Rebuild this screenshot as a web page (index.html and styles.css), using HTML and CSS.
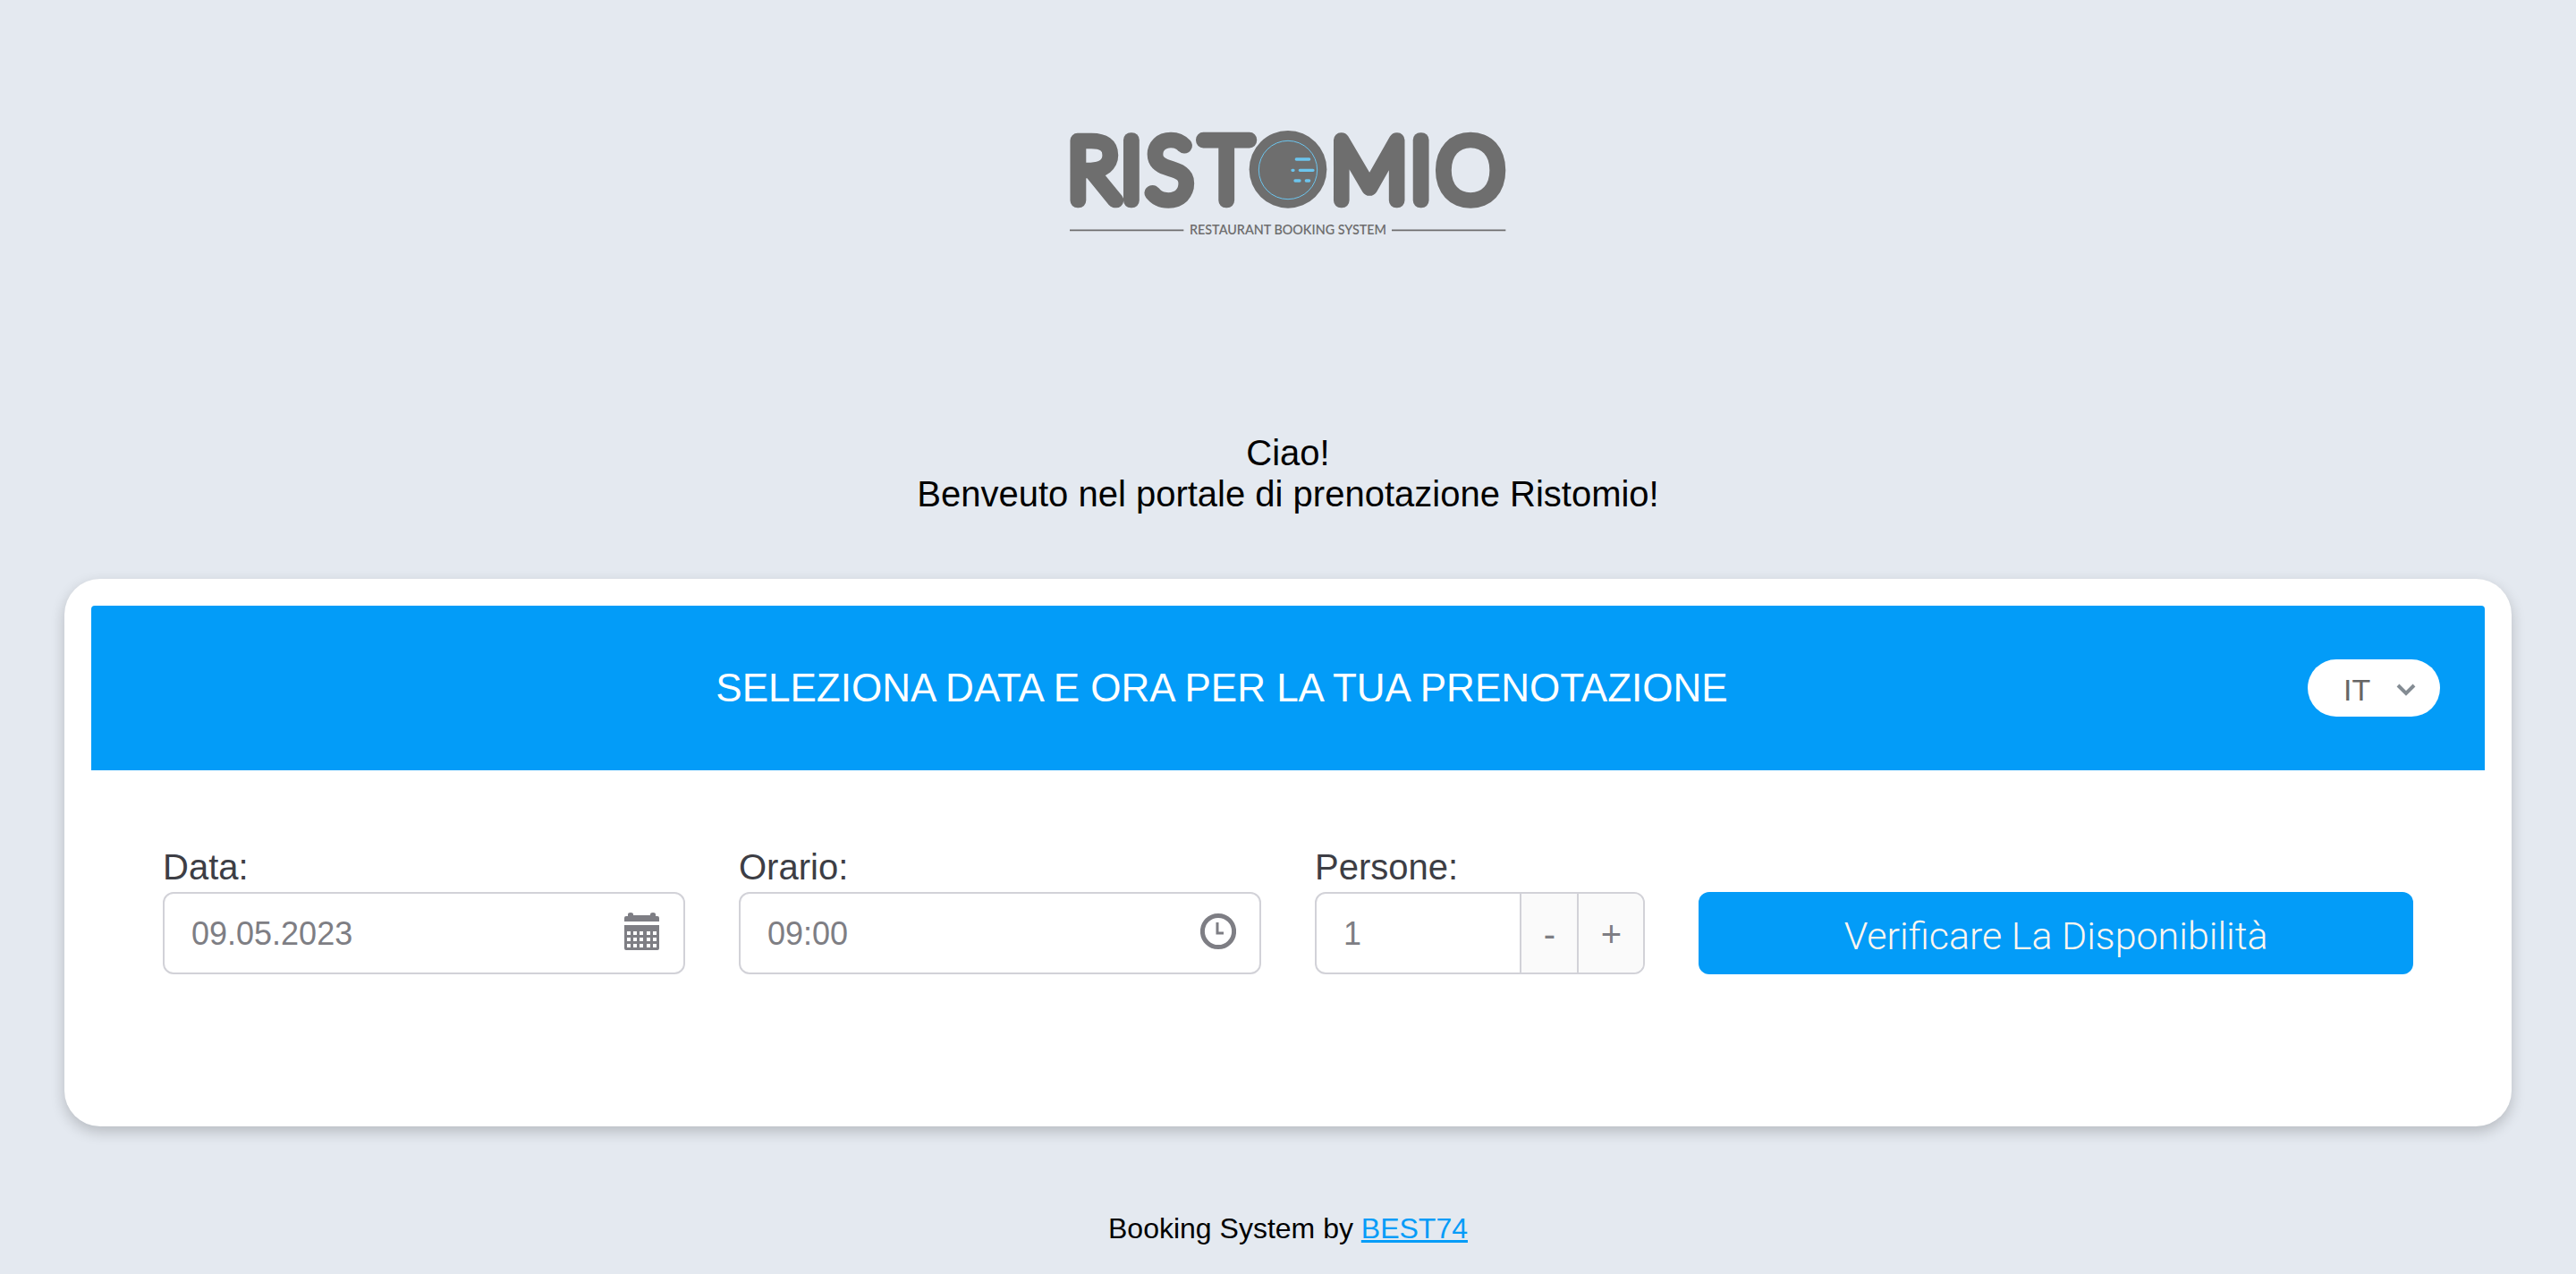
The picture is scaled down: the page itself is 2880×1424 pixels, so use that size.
FILE: index.html
```html
<!DOCTYPE html>
<html lang="it">
<head>
<meta charset="UTF-8">
<meta name="viewport" content="width=device-width, initial-scale=1.0">
<title>Ristomio - Restaurant Booking System</title>
<link rel="stylesheet" href="styles.css">
</head>
<body>

<header class="intro">
  <svg class="logo" viewBox="42 48 1476 351" role="img" aria-label="Ristomio">
    <g class="logo-word">
      <text x="126 255 383 573" y="281">RIST</text>
      <text x="1052 1226 1392" y="281">MIO</text>
    </g>
    <circle class="logo-plate" cx="780" cy="178" r="130"/>
    <circle class="logo-rim" cx="780" cy="180" r="98"/>
    <path class="logo-speed" d="M808 144h43M795 181h3M820 181h44M804 216h15M841 216h10"/>
    <path class="logo-rule" d="M48 382h382M1128 382h382"/>
    <text class="logo-tagline" x="780" y="397">RESTAURANT BOOKING SYSTEM</text>
  </svg>
  <p class="greeting">Ciao!<br>Benveuto nel portale di prenotazione Ristomio!</p>
</header>

<main class="card">
  <div class="card-header">
    <h1>SELEZIONA DATA E ORA PER LA TUA PRENOTAZIONE</h1>
    <div class="language">
      <select id="language" aria-label="Lingua">
        <option>IT</option>
        <option>EN</option>
        <option>DE</option>
      </select>
      <svg class="chevron" viewBox="0 0 22 14" aria-hidden="true"><path d="M2 2l9 9 9-9"/></svg>
    </div>
  </div>

  <form class="booking">
    <div class="field field-date">
      <label for="date">Data:</label>
      <div class="control">
        <input type="text" id="date" value="09.05.2023">
        <svg class="icon" viewBox="0 0 40 42" aria-hidden="true">
          <path fill-rule="evenodd" d="M0 10V6q0-2 2-2h2V2q0-2 3-2t3 2v1h19V2q0-2 3-2t3 2v2h2q2 0 2 2v4zM0 14h39v26q0 2-2 2H2q-2 0-2-2zM3 21v4h4v-4zM10 21v4h4v-4zM17 21v4h4v-4zM25 21v4h4v-4zM32 21v4h4v-4zM3 28v4h4v-4zM10 28v4h4v-4zM17 28v4h4v-4zM25 28v4h4v-4zM32 28v4h4v-4zM3 35v4h4v-4zM10 35v4h4v-4zM17 35v4h4v-4zM25 35v4h4v-4zM32 35v4h4v-4z"/>
        </svg>
      </div>
    </div>

    <div class="field field-time">
      <label for="time">Orario:</label>
      <div class="control">
        <input type="text" id="time" value="09:00">
        <svg class="icon icon-clock" viewBox="0 0 40 42" aria-hidden="true">
          <circle cx="20" cy="21" r="17.6"/>
          <path d="M19 11v12h7"/>
        </svg>
      </div>
    </div>

    <div class="field field-people">
      <label for="people">Persone:</label>
      <div class="control control-people">
        <input type="text" id="people" value="1" inputmode="numeric">
        <button type="button" class="step" aria-label="Meno">-</button>
        <button type="button" class="step step-plus" aria-label="Più">+</button>
      </div>
    </div>

    <button type="submit" class="submit">Verificare La Disponibilità</button>
  </form>
</main>

<footer class="footer">Booking System by <a href="#">BEST74</a></footer>

</body>
</html>
```

FILE: styles.css
```css
* {
  margin: 0;
  padding: 0;
  box-sizing: border-box;
}

body {
  background-color: #e4e9f0;
  color: #000;
  font-family: "Liberation Sans", Arial, sans-serif;
  font-size: 40px;
  line-height: 46px;
}

input,
select,
button {
  font-family: inherit;
  font-size: 36px;
  color: #7e7e84;
  border: none;
  background: none;
}

.intro {
  padding-top: 146px;
  text-align: center;
}

.logo {
  display: block;
  width: 492px;
  height: 117px;
  margin: 0 auto 220px;
  overflow: visible;
}

.logo-word {
  fill: #6e6e6e;
  stroke: #6e6e6e;
  stroke-width: 50;
  stroke-linejoin: round;
  font-family: Lato, sans-serif;
  font-size: 286px;
  font-weight: 100;
  text-anchor: middle;
}

.logo-plate {
  fill: #6e6e6e;
}

.logo-rim {
  fill: none;
  stroke: #6cc5ee;
  stroke-width: 3;
}

.logo-speed {
  stroke: #6cc5ee;
  stroke-width: 10;
  stroke-linecap: round;
}

.logo-rule {
  stroke: #6e6e6e;
  stroke-width: 5;
}

.logo-tagline {
  fill: #6e6e6e;
  font-family: Lato, sans-serif;
  font-size: 43px;
  font-weight: 600;
  text-anchor: middle;
}

.card {
  margin: 72px 72px 96px;
  padding: 30px;
  background-color: #fff;
  border-radius: 40px;
  box-shadow: 0 6px 16px rgba(0,0,0,0.2);
}

.card-header {
  display: flex;
  align-items: center;
  padding: 60px 50px;
  background-color: #039cf8;
  border-radius: 4px 4px 0 0;
}

.card-header h1 {
  flex: 1;
  color: #fff;
  font-size: 44px;
  font-weight: normal;
  line-height: 64px;
  text-align: center;
}

.language {
  position: relative;
}

.language select {
  appearance: none;
  display: block;
  width: 148px;
  height: 64px;
  padding: 4px 40px 0 40px;
  background-color: #fff;
  border-radius: 32px;
  color: #666;
  font-size: 34px;
}

.chevron {
  position: absolute;
  right: 27px;
  top: 27px;
  width: 22px;
  height: 14px;
  fill: none;
  stroke: #848c93;
  stroke-width: 4;
  pointer-events: none;
}

.booking {
  display: grid;
  grid-template-columns: repeat(12, 1fr);
  column-gap: 60px;
  align-items: end;
  padding: 85px 80px 140px;
}

.field-date,
.field-time {
  grid-column: span 3;
}

.field-people {
  grid-column: span 2;
}

.field label {
  display: block;
  margin-bottom: 5px;
  color: #3d3e45;
}

.control {
  display: flex;
  align-items: center;
  height: 92px;
  padding-right: 26px;
  border: 2px solid #d2d2d8;
  border-radius: 12px;
  overflow: hidden;
}

.control input {
  flex: 1;
  min-width: 0;
  height: 100%;
  padding: 2px 0 0 30px;
  outline: none;
}

.icon {
  width: 40px;
  height: 42px;
  margin-bottom: 4px;
  fill: #7e7e84;
}

.icon-clock {
  fill: none;
  stroke: #7e7e84;
  stroke-width: 5;
}

.icon-clock path {
  stroke-width: 3;
}

.control-people {
  padding-right: 0;
}

.step {
  width: 64px;
  height: 100%;
  padding-top: 2px;
  background-color: #fafafa;
  border-left: 2px solid #d2d2d8;
  font-size: 40px;
  cursor: pointer;
}

.step-plus {
  width: 74px;
}

.submit {
  grid-column: span 4;
  height: 92px;
  padding-top: 6px;
  background-color: #039cf8;
  border-radius: 12px;
  color: #fff6f0;
  font-family: Roboto, "Liberation Sans", sans-serif;
  font-size: 43px;
  font-weight: 300;
  cursor: pointer;
}

.footer {
  font-size: 32px;
  line-height: 36px;
  text-align: center;
}

.footer a {
  color: #039cf8;
}
```
